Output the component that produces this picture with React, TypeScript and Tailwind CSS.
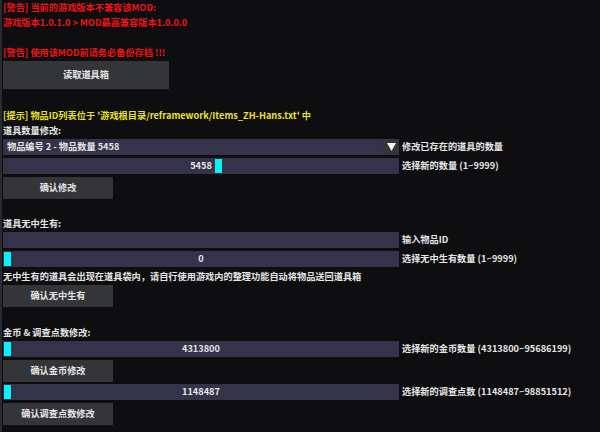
import React from 'react'

// ImGui-style mod panel, dark theme

const Line: React.FC<{ className?: string; children?: React.ReactNode }> = ({ className = 'text-[#e6e6e6]', children }) => (
  <div className={`h-[12px] leading-[12px] whitespace-nowrap ${className}`}>{children}</div>
)

const Btn: React.FC<{ label: string; wide?: boolean }> = ({ label, wide }) => (
  <div
    className={
      wide
        ? 'w-[166px] h-[28px] flex items-center justify-center bg-[#333539] text-[#e6e6e6]'
        : 'w-[110px] h-[22px] flex items-center justify-center bg-[#333539] text-[#e6e6e6]'
    }
  >
    {label}
  </div>
)

const Row: React.FC<{ label: string; className?: string; children?: React.ReactNode }> = ({ label, className = '', children }) => (
  <div className={`flex items-center gap-[3px] ${className}`}>
    <div className="relative w-[396px] h-[16px] bg-[#34334a] flex-shrink-0">{children}</div>
    <span className="whitespace-nowrap text-[#e6e6e6]">{label}</span>
  </div>
)

const Slider: React.FC<{ value: number; min: number; max: number; label: string; className?: string }> = ({
  value,
  min,
  max,
  label,
  className,
}) => {
  const t = Math.min(1, Math.max(0, (value - min) / (max - min)))
  const left = 1 + t * (396 - 2 - 7)
  return (
    <Row label={label} className={className}>
      <div className="absolute top-[1px] w-[7px] h-[14px] bg-[#00f5ff]" style={{ left }} />
      <div className="h-full flex items-center justify-center text-[#e6e6e6]">{value}</div>
    </Row>
  )
}

export default function App() {
  return (
    <div
      className="w-[600px] h-[432px] overflow-hidden bg-[#0e0e11] border-l-2 border-[#2a2a31] pl-[1px] pt-[1px] flex flex-col gap-[3px] text-[9.2px] font-bold"
      style={{ fontFamily: '"Noto Sans CJK SC", "Noto Sans", sans-serif' }}
    >
      <Line className="text-[#f01414]">[警告] 当前的游戏版本不兼容该MOD:</Line>
      <Line className="text-[#f01414]">游戏版本1.0.1.0 &gt; MOD最高兼容版本1.0.0.0</Line>
      <div className="h-[12px]" />
      <Line className="text-[#f01414]">[警告] 使用该MOD前请务必备份存档 !!!</Line>
      <Btn label="读取道具箱" wide />
      <div className="h-[14px]" />
      <Line className="text-[#ece21e]">[提示] 物品ID列表位于 '游戏根目录/reframework/Items_ZH-Hans.txt' 中</Line>
      <Line>道具数量修改:</Line>
      <Row label="修改已存在的道具的数量">
        <div className="h-full flex items-center">
          <span className="flex-1 pl-[4px] text-[#e6e6e6] whitespace-nowrap">物品编号 2 - 物品数量 5458</span>
          <div className="w-[16px] h-full bg-[#333539] flex items-center justify-center">
            <svg width="9" height="8" viewBox="0 0 9 8">
              <path d="M0 0 H9 L4.5 8 Z" fill="#f2f2f2" />
            </svg>
          </div>
        </div>
      </Row>
      <Slider value={5458} min={1} max={9999} label="选择新的数量 (1~9999)" />
      <Btn label="确认修改" />
      <div className="h-[12px]" />
      <Line>道具无中生有:</Line>
      <Row label="输入物品ID" />
      <Slider value={0} min={1} max={9999} label="选择无中生有数量 (1~9999)" />
      <Line>无中生有的道具会出现在道具袋内，请自行使用游戏内的整理功能自动将物品送回道具箱</Line>
      <Btn label="确认无中生有" />
      <div className="h-[13px]" />
      <Line>金币 &amp; 调查点数修改:</Line>
      <Slider value={4313800} min={4313800} max={95686199} label="选择新的金币数量 (4313800~95686199)" />
      <Btn label="确认金币修改" />
      <Slider
        value={1148487}
        min={1148487}
        max={98851512}
        label="选择新的调查点数 (1148487~98851512)"
        className="-mt-[1px]"
      />
      <Btn label="确认调查点数修改" />
    </div>
  )
}
